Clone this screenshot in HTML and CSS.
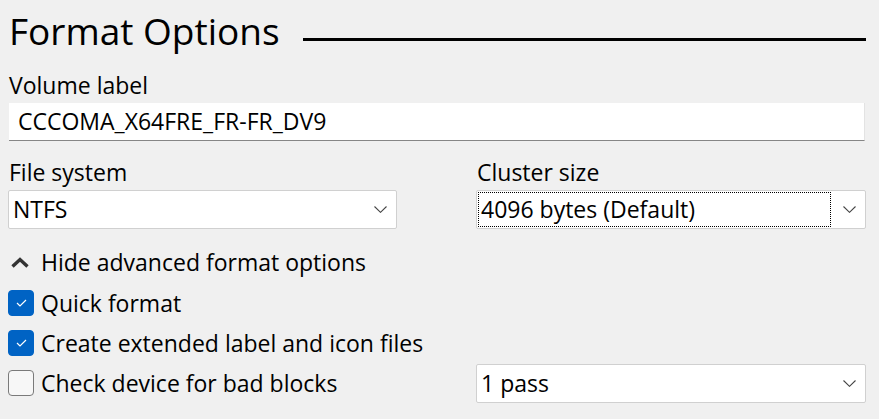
FILE: index.html
```html
<!DOCTYPE html>
<html>
<head>
<meta charset="utf-8">
<link rel="stylesheet" href="styles.css">
</head>
<body>
<div class="page">
  <div class="title-row">
    <h1 class="title">Format Options</h1>
    <span class="rule"></span>
  </div>
  <div class="lbl lbl-volume">Volume label</div>
  <div class="textbox">CCCOMA_X64FRE_FR-FR_DV9</div>
  <div class="two-col">
    <div class="field">
      <div class="lbl">File system</div>
      <div class="select">
        <span class="value">NTFS</span>
        <svg class="chev" width="13" height="7" viewBox="0 0 13 7"><path d="M0.5 0.5 L6.5 6.3 L12.5 0.5" fill="none" stroke="#444" stroke-width="1.1"/></svg>
      </div>
    </div>
    <div class="field">
      <div class="lbl">Cluster size</div>
      <div class="select">
        <span class="value focus">4096 bytes (Default)</span>
        <svg class="chev" width="13" height="7" viewBox="0 0 13 7"><path d="M0.5 0.5 L6.5 6.3 L12.5 0.5" fill="none" stroke="#444" stroke-width="1.1"/></svg>
      </div>
    </div>
  </div>
  <div class="toggle">
    <svg class="caret" width="18" height="11" viewBox="0 0 18 11"><path d="M1.5 9.5 L9 2.5 L16.5 9.5" fill="none" stroke="#333" stroke-width="3.4" stroke-linejoin="miter"/></svg>
    <span>Hide advanced format options</span>
  </div>
  <div class="checks">
    <div class="check-row">
      <span class="box checked"><svg width="11" height="8" viewBox="0 0 11 8"><path d="M1 4 L4 7 L10 1" fill="none" stroke="#fff" stroke-width="1.2"/></svg></span>
      <span>Quick format</span>
    </div>
    <div class="check-row">
      <span class="box checked"><svg width="11" height="8" viewBox="0 0 11 8"><path d="M1 4 L4 7 L10 1" fill="none" stroke="#fff" stroke-width="1.2"/></svg></span>
      <span>Create extended label and icon files</span>
    </div>
    <div class="two-col last-row">
      <div class="check-row">
        <span class="box"></span>
        <span>Check device for bad blocks</span>
      </div>
      <div class="select">
        <span class="value">1 pass</span>
        <svg class="chev" width="13" height="7" viewBox="0 0 13 7"><path d="M0.5 0.5 L6.5 6.3 L12.5 0.5" fill="none" stroke="#444" stroke-width="1.1"/></svg>
      </div>
    </div>
  </div>
</div>
</body>
</html>
```
FILE: styles.css
```css
html, body {
  margin: 0;
  padding: 0;
  background: #f0f0f0;
}
body {
  font-family: "Open Sans", "Noto Sans", sans-serif;
  color: #000;
  font-size: 23px;
}
.page {
  padding: 8px 13px 0 8px;
}
.title-row {
  display: flex;
  align-items: flex-start;
  height: 46px;
}
.title {
  margin: 0 0 0 1px;
  font-size: 37px;
  font-weight: 400;
  line-height: 46px;
  white-space: nowrap;
}
.rule {
  flex: 1;
  height: 3px;
  background: #000;
  margin: 30px 0 0 23px;
}
.lbl {
  line-height: 30px;
  height: 30px;
  padding-left: 1px;
  white-space: nowrap;
}
.lbl-volume {
  margin-top: 16px;
}
.textbox {
  margin-top: 3px;
  height: 37px;
  margin-left: 1px;
  margin-right: 1px;
  background: #fff;
  border-right: 1px solid #e3e3e3;
  border-bottom: 1px solid #868686;
  line-height: 37px;
  padding-left: 9px;
}
.two-col {
  display: grid;
  grid-template-columns: 389px 1fr;
  column-gap: 79px;
}
.field {
  min-width: 0;
}
.two-col .field .lbl {
  margin-top: 16px;
}
.select {
  height: 37px;
  margin-top: 3px;
  background: #fff;
  border: 1px solid #d0d0d0;
  border-radius: 2px;
  display: flex;
  align-items: center;
  justify-content: space-between;
  padding: 0 9px 0 4px;
}
.select .value {
  line-height: 33px;
}
.select .focus {
  outline: 1px dotted #000;
  outline-offset: 0;
  width: 349px;
  margin-left: -2px;
  padding-left: 2px;
  height: 33px;
}
.chev {
  display: block;
}
.toggle {
  margin-top: 18px;
  height: 30px;
  display: flex;
  align-items: center;
  white-space: nowrap;
}
.caret {
  margin-left: 3px;
  margin-right: 12px;
  display: block;
}
.checks {
  margin-top: 6px;
}
.check-row {
  display: flex;
  align-items: center;
  height: 40px;
  white-space: nowrap;
}
.box {
  box-sizing: border-box;
  width: 26px;
  height: 26px;
  border-radius: 4px;
  border: 1px solid #7a7a7a;
  background: #f7f7f7;
  margin-right: 7px;
  display: flex;
  align-items: center;
  justify-content: center;
}
.box.checked {
  background: #0063c4;
  border-color: #0063c4;
}
.last-row {
  align-items: center;
}
.last-row .select {
  margin-top: 0;
}
```
